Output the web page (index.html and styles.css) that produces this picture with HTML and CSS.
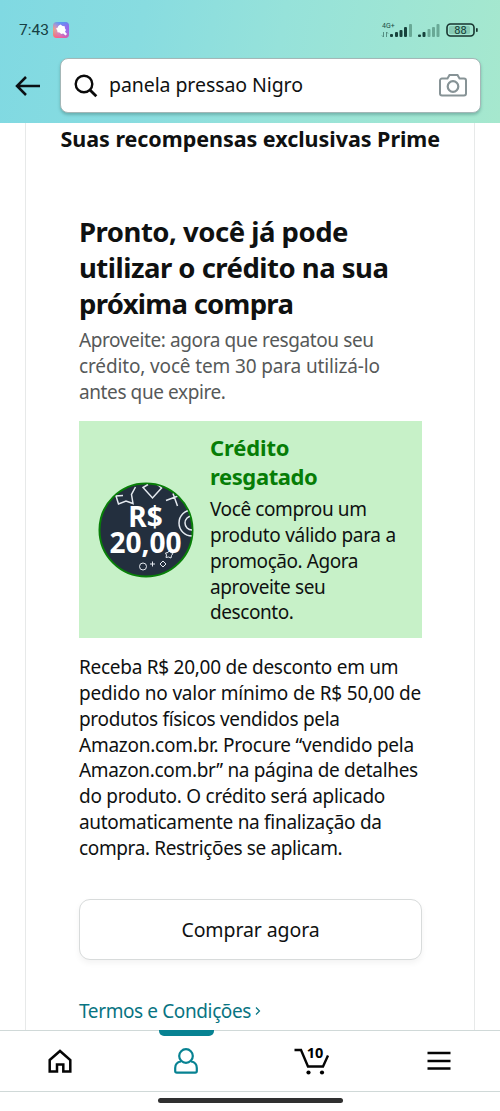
FILE: index.html
```html
<!DOCTYPE html>
<html lang="pt-BR">
<head>
<meta charset="utf-8">
<title>Recompensas Prime</title>
<link rel="stylesheet" href="styles.css">
</head>
<body>
<div class="screen">
  <header class="top">
    <div class="status">
      <span class="clock">7:43</span>
      <svg class="app-dot" width="16" height="16" viewBox="0 0 16 16">
        <defs><linearGradient id="tint" x1="0" y1=".7" x2="1" y2=".3"><stop offset="0" stop-color="#ffae4b"/><stop offset=".3" stop-color="#e79ab6"/><stop offset=".6" stop-color="#8b82f1"/><stop offset="1" stop-color="#a057e8"/></linearGradient>
        <linearGradient id="tint2" x1="0" y1="0" x2="0" y2="1"><stop offset="0" stop-color="#3ba7f5" stop-opacity=".7"/><stop offset=".45" stop-color="#9a7bed" stop-opacity=".1"/><stop offset="1" stop-color="#ff4b8d" stop-opacity=".8"/></linearGradient></defs>
        <rect width="16" height="16" rx="4" fill="url(#tint)"/><rect width="16" height="16" rx="4" fill="url(#tint2)"/>
        <path d="M7.500 2.500l2 1.500 2.200.3.300 2.300L13 8l-1 1.700 2 2.300-1.500 1.500-2.300-2-2 .5-1.700-1.400-2-.3-.3-2L3 6.500l1.800-1 .5-1.500z" fill="#fff"/>
      </svg>
      <svg class="signals" width="98" height="20" viewBox="0 0 98 20">
        <text x="1" y="7.500" class="net">4G+</text>
        <path d="M2.500 12v5M1 15.500L2.500 17M5.500 17v-5l1.500 1.500" stroke="#4d8378" stroke-width=".9" fill="none"/>
        <g fill="#18423c"><rect x="9" y="14" width="3" height="3" rx="1"/><rect x="14" y="12" width="3" height="5" rx="1"/><rect x="18.500" y="10" width="3" height="7" rx="1"/><rect x="23" y="7" width="3" height="10" rx="1"/><rect x="37" y="14.500" width="3" height="2.500" rx="1"/><rect x="41.500" y="12" width="3" height="5" rx="1"/></g>
        <g fill="#69a996"><rect x="28" y="4" width="3" height="13" rx="1"/><rect x="46.500" y="9" width="3" height="8" rx="1"/><rect x="51" y="7" width="3" height="10" rx="1"/><rect x="55.500" y="4" width="3" height="13" rx="1"/></g>
        <rect x="66" y="4" width="27" height="12" rx="3.500" fill="none" stroke="#18342f" stroke-width="1.600"/>
        <rect x="68" y="6" width="21" height="8" rx="1.500" fill="#88cbb5"/>
        <rect x="95" y="8" width="1.700" height="4" rx=".8" fill="#18342f"/>
        <text x="79.500" y="14" text-anchor="middle" class="pct">88</text>
      </svg>
    </div>
    <div class="search-row">
      <svg class="back" width="26" height="22" viewBox="0 0 26 22"><path d="M25 11H2.500M11 2L2 11l9 9" fill="none" stroke="#0b1014" stroke-width="2.500"/></svg>
      <div class="search">
        <svg width="24" height="24" viewBox="0 0 24 24"><circle cx="10" cy="10" r="8.300" fill="none" stroke="#0a0a0a" stroke-width="2.400"/><path d="M16 16l6.300 6.300" stroke="#0a0a0a" stroke-width="2.800"/></svg>
        <span class="query">panela pressao Nigro</span>
        <svg class="camera" width="28" height="23" viewBox="0 0 28 23"><path d="M3 4.500h5.500L10.500 1h8l2 3.500H25a2 2 0 0 1 2 2v13a2 2 0 0 1-2 2H3a2 2 0 0 1-2-2v-13a2 2 0 0 1 2-2z" fill="none" stroke="#879396" stroke-width="2"/><circle cx="14" cy="12.500" r="5.300" fill="none" stroke="#879396" stroke-width="2.200"/></svg>
      </div>
    </div>
  </header>

  <main class="card">
    <h1 class="title">Suas recompensas exclusivas Prime</h1>
    <section class="body">
      <h2 class="headline"><span class="h-a">Pronto, você já pode</span><span class="h-b">utilizar o crédito na sua</span><span class="h-c">próxima compra</span></h2>
      <p class="copy muted"><span class="m-a">Aproveite: agora que resgatou seu</span><span class="m-b">crédito, você tem 30 para utilizá-lo</span><span class="m-c">antes que expire.</span></p>
      <div class="reward">
        <div class="badge">
          <svg width="96" height="96" viewBox="0 0 96 96">
            <defs><clipPath id="disc"><circle cx="48" cy="48" r="46"/></clipPath></defs>
            <circle cx="48" cy="48" r="46.500" fill="#232f3e" stroke="#087f08" stroke-width="2"/>
            <g clip-path="url(#disc)" fill="none" stroke="#e4e9ef" stroke-width="1.500">
              <path d="M25 13.500l-7 .5 2.500 8 7.500-3 7 2.500-1.500-9L37.500 5M50 2.500l-5 3 9.500 10.500 9-10-4-3.500M68 18.500l12-4.500M75 11.500l4.500 12.500"/>
              <path d="M94 28a13 13 0 1 0 0 26M94 34a7 7 0 1 0 0 14"/>
              <circle cx="45" cy="84.500" r="3.500" stroke-width="1"/><path d="M52 82h5M54.500 79.500v5M65 79l3 3-3 3-3-3z" stroke-width="1"/>
              <path d="M71 69l2 1.500 2 1-1.500 2-.5 2.500-2.500-1-2.500.5.500-2.500-1-2 2.500-.5z" stroke-width="1"/>
            </g>
          </svg>
          <div class="amount">R$<br>20,00</div>
        </div>
        <div class="reward-text">
          <h3 class="reward-title"><span class="r-a">Crédito</span><span class="r-b">resgatado</span></h3>
          <p class="copy"><span class="c-a">Você comprou um</span><span class="c-b">produto válido para a</span><span class="c-c">promoção. Agora</span><span class="c-d">aproveite seu</span><span class="c-e">desconto.</span></p>
        </div>
      </div>
      <p class="copy details"><span class="d-a">Receba R$ 20,00 de desconto em um</span><span class="d-b">pedido no valor mínimo de R$ 50,00 de</span><span class="d-c">produtos físicos vendidos pela</span><span class="d-d">Amazon.com.br. Procure “vendido pela</span><span class="d-e">Amazon.com.br” na página de detalhes</span><span class="d-f">do produto. O crédito será aplicado</span><span class="d-g">automaticamente na finalização da</span><span class="d-h">compra. Restrições se aplicam.</span></p>
      <button class="buy">Comprar agora</button>
      <a class="terms"><span>Termos e Condições</span><svg width="6" height="10" viewBox="0 0 6 10"><path d="M1 1.500L4.500 5 1 8.500" fill="none" stroke="#087482" stroke-width="1.200"/></svg></a>
    </section>
  </main>

  <nav class="tabs">
    <div class="tab home"><svg width="24" height="24" viewBox="0 0 24 24"><path d="M1.700 11L12 2l10.300 9v11.500h-7v-7H9v7H1.700z" fill="none" stroke="#050505" stroke-width="2.500"/></svg></div>
    <div class="tab active"><svg width="24" height="26" viewBox="0 0 24 26"><circle cx="12" cy="8" r="6.800"/><path d="M7 13.500C3.500 14 1.200 16.500 1.200 20v3q0 1.700 1.700 1.700h18.200q1.700 0 1.700-1.700v-3c0-3.500-2.300-6-5.800-6.500"/></svg></div>
    <div class="tab cart"><svg width="36" height="38" viewBox="0 -4 36 38"><path d="M.5 4h6.500L14 20.500h15l5-11" fill="none" stroke="#050505" stroke-width="2.400"/><circle cx="14.500" cy="26.500" r="2.100"/><circle cx="28" cy="26.500" r="2.100"/><text x="21" y="11.500" class="count">10</text></svg></div>
    <div class="tab menu"><svg width="24" height="20" viewBox="0 0 24 20"><path d="M.5 2h23M.5 10h23M.5 17.500h23" stroke="#050505" stroke-width="2.400"/></svg></div>
  </nav>
  <div class="gesture"><span></span></div>
</div>
</body>
</html>
```
FILE: styles.css
```css
* { box-sizing: border-box; }
body, h1, h2, h3, p { margin: 0; }
body { font-family: "Noto Sans", sans-serif; color: #0f1111; background: #fff; }
.screen { width: 500px; height: 1111px; display: flex; flex-direction: column; overflow: hidden; }
.top { height: 123px; flex: none; background: linear-gradient(100deg, #80d9e2 0%, #88dce0 28%, #96e2da 55%, #a6e8ce 100%); }
.status { height: 58px; padding: 20px 21px 0 19px; display: flex; align-items: flex-start; }
.clock { font: 15.500px/20px Roboto, sans-serif; color: #173f43; width: 34px; }
.app-dot { margin-top: 2px; }
.signals { margin-left: auto; }
.net { font: 7px Roboto, sans-serif; fill: #204c45; }
.pct { font: 400 11px Roboto, sans-serif; fill: #123b35; }
.search-row { display: flex; align-items: center; padding: 0 19px 0 15px; gap: 19px; }
.search { flex: 1; height: 55px; padding: 0 13px; display: flex; align-items: center; background: #fff; border: 1px solid #a4b7b7; border-radius: 8px; box-shadow: 0 2px 3px #3c757066; }
.query { margin-left: 11px; font-size: 19.500px; letter-spacing: -.08px; line-height: 26px; margin-bottom: 1px; white-space: nowrap; }
.camera { margin-left: auto; }
.card { flex: 1; min-height: 0; margin: 0 25px; border: solid #e7e9e9; border-width: 0 1px; overflow: hidden; }
.title { height: 34px; padding-left: 34.500px; font-size: 21.500px; letter-spacing: -.04px; line-height: 32px; white-space: nowrap; }
.body { padding: 56.500px 52px 0 53px; }
.headline span, .copy span, .reward-title span { display: block; width: max-content; white-space: nowrap; }
.headline { font-size: 27.500px; line-height: 36.300px; }
.copy { font-size: 19px; line-height: 25.800px; }
.muted { color: #565959; margin-top: 6px; }
.reward { height: 217px; margin-top: 15.500px; padding: 0 18.500px; display: flex; align-items: center; gap: 16.500px; background: #c7f1c8; }
.reward-title { font-size: 22px; line-height: 29px; margin-bottom: 6px; color: #067d06; }
.badge { flex: none; display: grid; width: 96px; height: 96px; }
.badge > * { grid-area: 1 / 1; }
.amount { z-index: 1; padding-top: 22.500px; text-align: center; font-weight: 700; font-size: 28px; line-height: 25.500px; color: #fff; }
.details { margin-top: 17px; }
.h-a { letter-spacing: -.49px; }
.h-b { letter-spacing: -.51px; }
.h-c { letter-spacing: -.71px; }
.m-a { letter-spacing: -.39px; }
.m-b { letter-spacing: -.14px; }
.m-c { letter-spacing: -.4px; }
.r-a { letter-spacing: -.15px; }
.r-b { letter-spacing: -.4px; }
.c-a { letter-spacing: -.4px; }
.c-b { letter-spacing: -.28px; }
.c-c { letter-spacing: -.45px; }
.c-d { letter-spacing: -.38px; }
.c-e { letter-spacing: -.42px; }
.d-a { letter-spacing: -.27px; }
.d-b { letter-spacing: -.19px; }
.d-c { letter-spacing: -.33px; }
.d-d { letter-spacing: -.25px; }
.d-e { letter-spacing: -.33px; }
.d-f { letter-spacing: -.27px; }
.d-g { letter-spacing: -.3px; }
.d-h { letter-spacing: -.37px; }
.buy { display: block; width: 343px; height: 61px; margin-top: 37px; background: #fff; border: 1px solid #d8dbdb; border-radius: 11px; box-shadow: 0 3px 6px #0000000d; font: 19.500px "Noto Sans", sans-serif; letter-spacing: -.1px; color: #0f1111; }
.terms { display: flex; align-items: center; gap: 4px; margin-top: 37px; color: #087482; font-size: 19px; letter-spacing: -.39px; line-height: 28px; }
.tabs { height: 62px; flex: none; border: solid #d0d9d8; border-width: 1px 0; display: grid; grid-template-columns: 123px 126px 126px 125px; }
.tab { display: flex; align-items: center; justify-content: center; }
.tab.home { padding-right: 3px; }
.tab.menu { padding-left: 3px; }
.tab.active { position: relative; }
.tab.active svg { fill: none; stroke: #078292; stroke-width: 2.200; }
.tab.active::before { content: ""; position: absolute; top: -1px; left: 36px; width: 55px; height: 6px; background: #078292; border-radius: 0 0 5px 5px; }
.count { font: 700 14.500px "Noto Sans", sans-serif; text-anchor: middle; }
.gesture { height: 19px; flex: none; display: flex; justify-content: center; padding-top: 6px; }
.gesture span { width: 185px; height: 5px; border-radius: 3px; background: #303030; }
```
